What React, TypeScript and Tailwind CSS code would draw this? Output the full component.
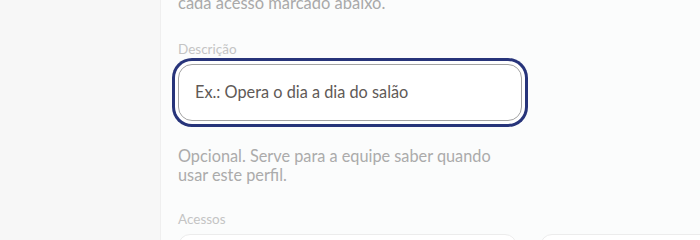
import React from 'react';

const App: React.FC = () => {
  return (
    <div
      className="w-[700px] h-[240px] flex overflow-hidden bg-[#f7f7f7]"
      style={{ fontFamily: 'Lato, "Noto Sans", sans-serif' }}
    >
      {/* Left backdrop */}
      <div className="w-[160px] shrink-0 bg-[#f7f7f7]" />

      {/* Form panel */}
      <div className="flex-1 border-l border-[#efefef] bg-[#fbfcfc] pl-[17px]">
        <div className="-mt-[7px] flex flex-col">
          <p className="text-[16.5px] leading-[20px] text-[#a9a9a9]">
            cada acesso marcado abaixo.
          </p>

          <label className="mt-[28px] text-[13.5px] leading-[16px] text-[#c4c4c4]">
            Descrição
          </label>
          <div className="mt-[7px] w-[344px] h-[57px] rounded-[14px] border border-[#a3a3a3] bg-white ring-[3px] ring-[#27347a] ring-offset-[3px] ring-offset-white flex items-center pl-[16px]">
            <span className="text-[16.3px] text-[#5f5a57]">Ex.: Opera o dia a dia do salão</span>
          </div>

          <p className="mt-[25px] w-[325px] text-[16.3px] leading-[19px] text-[#ababab]">
            Opcional. Serve para a equipe saber quando usar este perfil.
          </p>

          <label className="mt-[27px] text-[13.5px] leading-[16px] text-[#c4c4c4]">
            Acessos
          </label>
          <div className="mt-[7px] flex gap-[23px]">
            <div className="w-[339px] h-[60px] rounded-[12px] border border-[#ececec] bg-white" />
            <div className="w-[339px] h-[60px] rounded-[12px] border border-[#ececec] bg-white" />
          </div>
        </div>
      </div>
    </div>
  );
};

export default App;
